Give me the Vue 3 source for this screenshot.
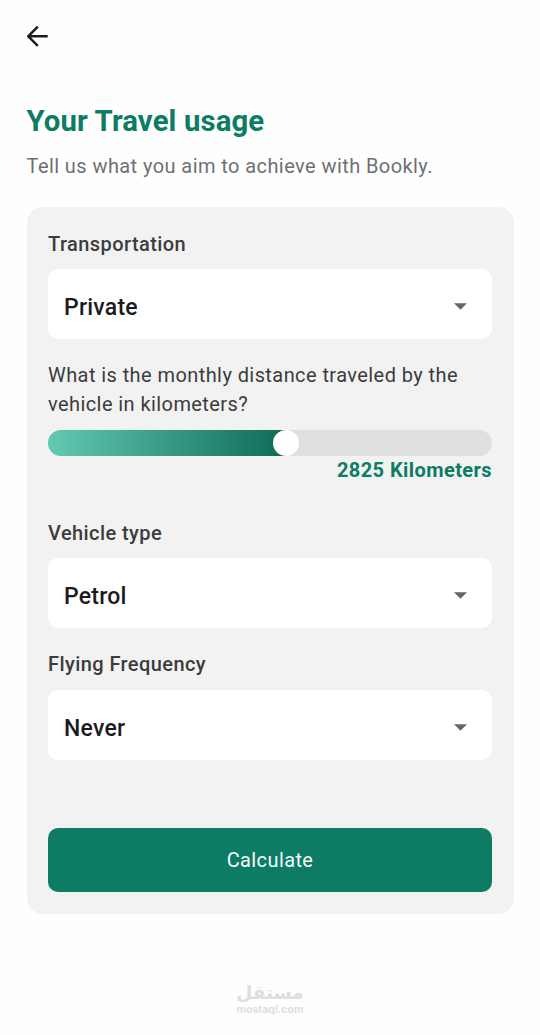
<script setup>
import { ref, computed } from 'vue'

const distance = ref(2825)
const sliderPercent = computed(() => (distance.value / 5276) * 100)
</script>

<template>
  <div class="screen">
    <header class="topbar">
      <button class="back" aria-label="Back">
        <svg viewBox="0 0 22 22" width="22" height="22">
          <path d="M20.7 11.3H1.5M10.8 1.7L1.2 11.3l9.6 9.6" fill="none" stroke="#1c1b1f" stroke-width="2.5" />
        </svg>
      </button>
    </header>

    <h1 class="title">Your Travel usage</h1>
    <p class="subtitle">Tell us what you aim to achieve with Bookly.</p>

    <main class="card">
      <div class="label">Transportation</div>
      <div class="select">
        <span>Private</span>
        <svg class="caret" viewBox="0 0 13 7" width="13" height="7"><path d="M0 .2h13L6.5 6.8z" /></svg>
      </div>

      <p class="question">What is the monthly distance traveled by the vehicle in kilometers?</p>
      <div class="track">
        <div class="fill" :style="{ width: sliderPercent + '%' }"></div>
        <div class="knob" :style="{ left: sliderPercent + '%' }"></div>
      </div>
      <div class="value">{{ distance }} Kilometers</div>

      <div class="label vehicle">Vehicle type</div>
      <div class="select">
        <span class="low">Petrol</span>
        <svg class="caret" viewBox="0 0 13 7" width="13" height="7"><path d="M0 .2h13L6.5 6.8z" /></svg>
      </div>

      <div class="label flying">Flying Frequency</div>
      <div class="select">
        <span class="low">Never</span>
        <svg class="caret" viewBox="0 0 13 7" width="13" height="7"><path d="M0 .2h13L6.5 6.8z" /></svg>
      </div>

      <button class="calculate">Calculate</button>
    </main>

    <footer class="brand">
      <div class="brand-ar" lang="ar" dir="rtl">مستقل</div>
      <div class="brand-en">mostaql.com</div>
    </footer>
  </div>
</template>

<style>
html,
body {
  background: #fefefe;
}
</style>

<style scoped>
.screen {
  box-sizing: border-box;
  width: 540px;
  height: 1035px;
  padding: 0 26.5px;
  overflow: hidden;
  background: #fefefe;
  font-family: Roboto, "Liberation Sans", sans-serif;
  color: #1c1b1f;
}
.topbar {
  height: 72px;
  display: flex;
  align-items: center;
}
button {
  border: 0;
  padding: 0;
  background: none;
  font-family: inherit;
}
.back,
.back svg {
  display: block;
}
.title {
  margin: 31px 0 0;
  font-size: 29.33px;
  line-height: 37px;
  font-weight: 700;
  letter-spacing: 0.12px;
  color: #0c7c64;
}
.subtitle {
  margin: 12px 0 0;
  font-size: 20px;
  line-height: 28px;
  letter-spacing: 0.42px;
  color: #6f7072;
}
.card {
  box-sizing: border-box;
  height: 707px;
  margin-top: 27px;
  padding: 23px 21.5px 0;
  border-radius: 16px;
  background: #f2f2f2;
}
.label {
  height: 28px;
  font-size: 20px;
  line-height: 28px;
  font-weight: 500;
  letter-spacing: 0.42px;
  color: #3c3c3d;
}
.select {
  box-sizing: border-box;
  height: 70px;
  margin-top: 11px;
  padding: 6px 25px 0 16px;
  display: flex;
  align-items: center;
  justify-content: space-between;
  border-radius: 10px;
  background: #fff;
  font-size: 23px;
  font-weight: 500;
  letter-spacing: 0.22px;
}
.flying + .select {
  margin-top: 11.3px;
}
.low {
  margin-top: 1.2px;
}
.caret {
  margin-bottom: 1px;
  fill: #666;
}
.question {
  margin: 22px 0 0;
  font-size: 20px;
  line-height: 29px;
  letter-spacing: 0.42px;
  color: #3c3c3d;
}
.track {
  position: relative;
  height: 26px;
  margin-top: 11px;
  border-radius: 13px;
  background: #dfdfdf;
}
.fill {
  height: 26px;
  border-radius: 13px 0 0 13px;
  background: linear-gradient(90deg, #62c9b3, #0e6b58);
}
.knob {
  position: absolute;
  top: 0;
  width: 26px;
  height: 26px;
  margin-left: -13px;
  border-radius: 50%;
  background: #fff;
}
.value {
  font-size: 20px;
  line-height: 28px;
  font-weight: 700;
  letter-spacing: 0.42px;
  text-align: right;
  color: #0c7c64;
}
.vehicle {
  margin-top: 35.4px;
}
.flying {
  margin-top: 22px;
}
.calculate {
  display: block;
  width: 100%;
  height: 64px;
  margin-top: 68px;
  border-radius: 10px;
  background: #0e7c65;
  color: #f1fbf8;
  font-size: 20px;
  letter-spacing: 0.4px;
}
.brand {
  margin-top: 68px;
  text-align: center;
  color: #dedede;
}
.brand-ar {
  height: 22px;
  font: 700 18.5px/22px "DejaVu Sans", sans-serif;
}
.brand-en {
  font: 700 10.5px/11px Inter, sans-serif;
}
</style>
